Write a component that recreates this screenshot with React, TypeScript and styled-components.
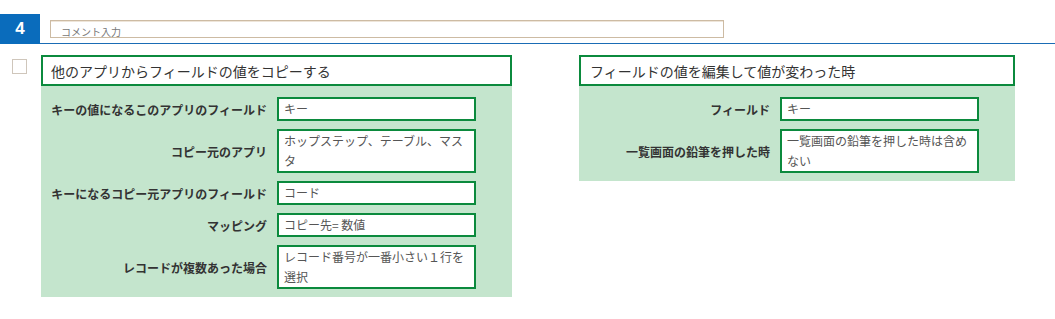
import { Fragment } from 'react'
import styled, { createGlobalStyle } from 'styled-components'

/* --------------------- Style --------------------- */
const GlobalStyle = createGlobalStyle`
  html, body {
    margin: 0;
    padding: 0;
    background: #fff;
  }
  body {
    font-family: 'Noto Sans CJK JP', 'Noto Sans', sans-serif;
    color: #333;
  }
`
const Header = styled.div`
  display: flex;
  align-items: center;
  margin-top: 14px;
  height: 29px;
  border-bottom: solid 1px #1a6cb5;
`
const Number = styled.div`
  width: 40px;
  height: 30px;
  margin-bottom: -1px;
  background: #0a6cbc;
  color: #fff;
  font-family: 'Liberation Sans', Arial, sans-serif;
  font-weight: bold;
  font-size: 17px;
  display: flex;
  align-items: center;
  justify-content: center;
`
const Comment = styled.input`
  margin-left: 10px;
  width: 674px;
  height: 18px;
  box-sizing: border-box;
  border: solid 1px #cdbba3;
  box-shadow: inset 0 1px 0 #eee5d9;
  padding: 5px 0 0 10px;
  font-family: inherit;
  font-size: 10px;
  outline: none;
  &::placeholder {
    color: #777;
  }
`
const Body = styled.div`
  display: flex;
  align-items: flex-start;
  padding-top: 11px;
`
const Check = styled.div`
  width: 15px;
  height: 15px;
  box-sizing: border-box;
  border: solid 1px #cfc6bb;
  margin: 4px 14px 0 12px;
  background: #fff;
`
const Panel = styled.section<{ $width: number }>`
  width: ${(p) => p.$width}px;
  & + & {
    margin-left: 67px;
  }
`
const Title = styled.h2<{ $pad: number }>`
  margin: 0;
  height: 31px;
  box-sizing: border-box;
  border: solid 2px #0b8a3d;
  background: #fff;
  padding-left: ${(p) => p.$pad}px;
  display: flex;
  align-items: center;
  font-size: 14px;
  font-weight: normal;
  color: #333;
`
const Fields = styled.div<{ $label: number }>`
  background: #c4e5cd;
  padding: 11px 0 8px;
  display: grid;
  grid-template-columns: ${(p) => p.$label}px 199px;
  row-gap: 8px;
  align-items: center;
`
const Label = styled.div`
  text-align: right;
  padding-right: 10px;
  font-size: 12px;
  font-weight: bold;
  color: #333;
  white-space: nowrap;
`
const Value = styled.div`
  box-sizing: border-box;
  border: solid 2px #0b8a3d;
  background: #fff;
  padding: 0 5px;
  font-size: 12px;
  line-height: 20px;
  color: #555;
`
/* ------------------------------------------------- */

const copyRows = [
  ['キーの値になるこのアプリのフィールド', 'キー'],
  ['コピー元のアプリ', 'ホップステップ、テーブル、マスタ'],
  ['キーになるコピー元アプリのフィールド', 'コード'],
  ['マッピング', 'コピー先= 数値'],
  ['レコードが複数あった場合', 'レコード番号が一番小さい１行を選択'],
]
const editRows = [
  ['フィールド', 'キー'],
  ['一覧画面の鉛筆を押した時', '一覧画面の鉛筆を押した時は含めない'],
]

const App: React.FC = () => {
  return (
    <>
      <GlobalStyle />
      <Header>
        <Number>4</Number>
        <Comment placeholder="コメント入力" />
      </Header>
      <Body>
        <Check />
        <Panel $width={471}>
          <Title $pad={8}>他のアプリからフィールドの値をコピーする</Title>
          <Fields $label={236}>
            {copyRows.map(([label, value]) => (
              <Fragment key={label}>
                <Label>{label}</Label>
                <Value>{value}</Value>
              </Fragment>
            ))}
          </Fields>
        </Panel>
        <Panel $width={436}>
          <Title $pad={9}>フィールドの値を編集して値が変わった時</Title>
          <Fields $label={201}>
            {editRows.map(([label, value]) => (
              <Fragment key={label}>
                <Label>{label}</Label>
                <Value>{value}</Value>
              </Fragment>
            ))}
          </Fields>
        </Panel>
      </Body>
    </>
  )
}
export default App
